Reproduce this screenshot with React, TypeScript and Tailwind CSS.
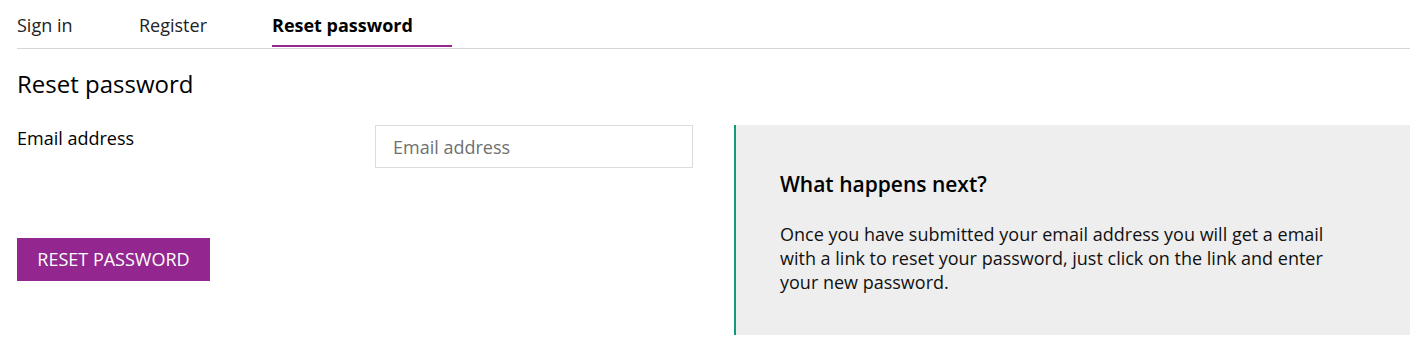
import React from "react";

export default function App() {
  const font = { fontFamily: '"Open Sans", "Noto Sans", sans-serif' };
  return (
    <div className="w-[1417px] h-[342px] bg-white text-black" style={font}>
      <div className="pl-[17px] pr-[7px]">
        <div className="flex border-b border-[#d6d6d6] h-[49px]">
          <div className="w-[122px] pt-[11px] text-[18px] leading-[28px] text-[#222]">Sign in</div>
          <div className="w-[133px] pt-[11px] text-[18px] leading-[28px] text-[#222]">Register</div>
          <div className="w-[180px] pt-[11px] text-[18px] leading-[28px] font-bold">
            <div className="h-[34px]">Reset password</div>
            <div className="h-[2px] bg-[#93278f]"></div>
          </div>
        </div>
        <h1 className="mt-[19px] text-[24px] leading-[32px] font-normal">Reset password</h1>
        <div className="flex mt-[25px]">
          <div className="w-[717px] flex flex-col">
            <div className="flex">
              <label className="w-[358px] pt-[1px] text-[18px] leading-[24px]">Email address</label>
              <input
                className="w-[318px] h-[43px] border border-[#dcdcdc] px-[17px] text-[18px] placeholder:text-[#707070] outline-none"
                placeholder="Email address"
                style={font}
              />
            </div>
            <button className="mt-[70px] w-[193px] h-[43px] bg-[#93278f] text-white text-[18px] uppercase">
              Reset password
            </button>
          </div>
          <div className="flex-1 h-[210px] bg-[#eeeeee] border-l-2 border-[#0f9a78] pl-[44px] pr-[62px] pt-[45px]">
            <h2 className="text-[21px] leading-[28px] font-semibold">What happens next?</h2>
            <p className="mt-[24px] text-[18px] leading-[24px] text-[#111]">
              Once you have submitted your email address you will get a email with a link to reset your password, just click on the link and enter your new password.
            </p>
          </div>
        </div>
      </div>
    </div>
  );
}
